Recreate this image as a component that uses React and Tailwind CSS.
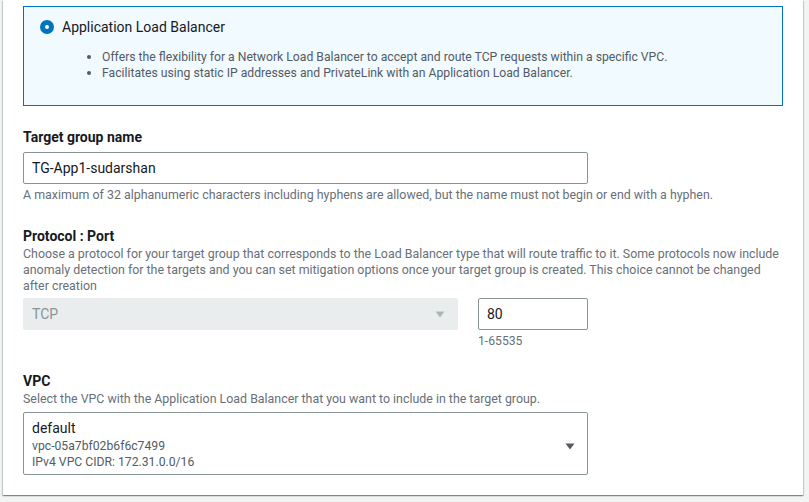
import React from 'react';

const Caret = ({ color }) => (
  <svg width="10" height="7" viewBox="0 0 10 7" className="shrink-0">
    <polygon points="0.5,0.5 9.5,0.5 5,6.5" fill={color} />
  </svg>
);

export default function App() {
  return (
    <div
      className="w-[809px] h-[502px] overflow-hidden bg-[#f2f3f3] text-[#16191f]"
      style={{ fontFamily: 'Roboto, "Liberation Sans", sans-serif' }}
    >
      {/* Card */}
      <div className="ml-[3px] w-[800px] bg-white px-5 pt-[6px] pb-5 shadow-[0_1px_1px_0_rgba(0,28,36,0.3),1px_1px_1px_0_rgba(0,28,36,0.15),-1px_1px_1px_0_rgba(0,28,36,0.15)]">

        {/* Load balancer type tile */}
        <div className="w-[760px] h-[100px] border border-[#0073bb] bg-[#f1faff] px-4 pt-[10px]">
          <div className="flex items-center h-5 gap-2">
            <span className="w-[14px] h-[14px] rounded-full border-[5px] border-[#0073bb] bg-white shrink-0" />
            <span className="text-[14px] leading-5">Application Load Balancer</span>
          </div>
          <ul className="mt-3 text-[12.2px] leading-4 text-[#545b64]">
            <li className="flex items-center">
              <span className="ml-[47px] w-[4px] h-[4px] rounded-full bg-[#545b64]" />
              <span className="ml-[11px]">Offers the flexibility for a Network Load Balancer to accept and route TCP requests within a specific VPC.</span>
            </li>
            <li className="flex items-center">
              <span className="ml-[47px] w-[4px] h-[4px] rounded-full bg-[#545b64]" />
              <span className="ml-[11px]">Facilitates using static IP addresses and PrivateLink with an Application Load Balancer.</span>
            </li>
          </ul>
        </div>

        {/* Target group name */}
        <div className="mt-[21px] text-[14px] leading-5 font-bold">Target group name</div>
        <div className="mt-[5px] w-[565px] h-8 border border-[#879596] rounded-[2px] px-2 flex items-center text-[14px]">
          TG-App1-sudarshan
        </div>
        <div className="mt-[3px] text-[12.4px] leading-4 text-[#687078] whitespace-nowrap">
          A maximum of 32 alphanumeric characters including hyphens are allowed, but the name must not begin or end with a hyphen.
        </div>

        {/* Protocol : Port */}
        <div className="mt-[23px] text-[14px] leading-5 font-bold">Protocol : Port</div>
        <div className="text-[12.4px] leading-4 text-[#687078] whitespace-nowrap">
          Choose a protocol for your target group that corresponds to the Load Balancer type that will route traffic to it. Some protocols now include
          <br />
          anomaly detection for the targets and you can set mitigation options once your target group is created. This choice cannot be changed
          <br />
          after creation
        </div>
        <div className="mt-1 flex gap-5">
          <div className="w-[435px] h-8 bg-[#eaeded] border border-[#eaeded] rounded-[2px] pl-2 pr-3 flex items-center justify-between text-[14px] text-[#879596]">
            <span>TCP</span>
            <Caret color="#aab7b8" />
          </div>
          <div>
            <div className="w-[110px] h-8 border border-[#879596] rounded-[2px] px-2 flex items-center text-[14px]">
              80
            </div>
            <div className="mt-[3px] text-[12.2px] leading-4 text-[#687078]">1-65535</div>
          </div>
        </div>

        {/* VPC */}
        <div className="mt-[22px] text-[14px] leading-5 font-bold">VPC</div>
        <div className="text-[12.4px] leading-4 text-[#687078] whitespace-nowrap">
          Select the VPC with the Application Load Balancer that you want to include in the target group.
        </div>
        <div className="mt-[5px] w-[565px] h-[63px] border border-[#879596] rounded-[2px] pl-2 pr-3 pt-[5px] flex items-center justify-between">
          <div className="self-start">
            <div className="text-[14px] leading-5">default</div>
            <div className="text-[12.2px] leading-4 text-[#545b64]">vpc-05a7bf02b6f6c7499</div>
            <div className="text-[12.2px] leading-4 text-[#545b64]">IPv4 VPC CIDR: 172.31.0.0/16</div>
          </div>
          <Caret color="#545b64" />
        </div>
      </div>
    </div>
  );
}
